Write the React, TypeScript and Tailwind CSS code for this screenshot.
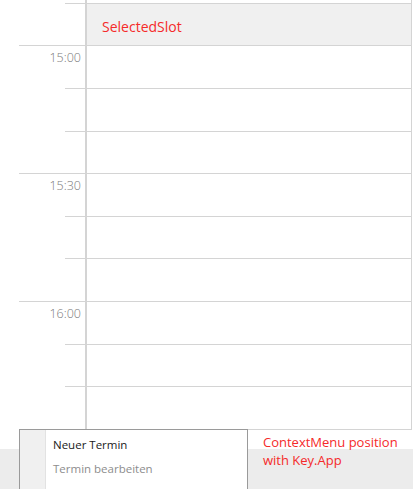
import React from 'react';

type Row = { h: number; full: boolean; label?: string; selected?: boolean };

const rows: Row[] = [
  { h: 4, full: false },
  { h: 42, full: true, selected: true },
  { h: 43, full: false, label: '15:00' },
  { h: 43, full: false },
  { h: 42, full: true },
  { h: 43, full: false, label: '15:30' },
  { h: 42, full: false },
  { h: 43, full: true },
  { h: 43, full: false, label: '16:00' },
  { h: 42, full: false },
  { h: 43, full: true },
];

const font = { fontFamily: '"Open Sans", "Noto Sans", sans-serif' };

const SlotRow: React.FC<{ row: Row }> = ({ row }) => (
  <div className="flex" style={{ height: row.h }}>
    <div className={`w-[66px] flex flex-col ${row.full ? 'border-b border-[#d4d4d4]' : ''}`}>
      {row.label && (
        <div className="pt-[3px] pr-[4px] text-right text-[12.5px] leading-[17px] font-light text-[#7a7a7a]">
          {row.label}
        </div>
      )}
      <div className="flex-1" />
      {!row.full && <div className="ml-[46px] h-px bg-[#d4d4d4]" />}
    </div>
    <div className="w-[2px] bg-[#d4d4d4]" />
    <div
      className={`flex-1 border-b border-r border-[#d4d4d4] flex items-center ${
        row.selected ? 'bg-[#f0f0f0]' : 'bg-white'
      }`}
    >
      {row.selected && (
        <span className="pl-[15px] pt-[4px] text-[14px] text-[#f52a2a]">SelectedSlot</span>
      )}
    </div>
  </div>
);

export default function App() {
  return (
    <div className="relative w-[417px] h-[489px] overflow-hidden bg-white flex flex-col" style={font}>
      <div className="ml-[19px] w-[393px] flex flex-col">
        {rows.map((r, i) => (
          <SlotRow key={i} row={r} />
        ))}
      </div>
      <div className="h-[19px] bg-white" />
      <div className="flex-1 w-[413px] bg-[#ececec]" />

      {/* context menu */}
      <div className="absolute left-[19px] top-[429px] w-[229px] h-[70px] border border-[#9a9a9a] bg-white flex">
        <div className="w-[26px] bg-[#f0f0f0] border-r border-[#e2e2e2]" />
        <div className="flex-1 pt-[3px] pl-[7px] text-[11.5px]">
          <div className="h-[24px] leading-[24px] text-[#1a1a1a]">Neuer Termin</div>
          <div className="h-[24px] leading-[24px] text-[#8d8d8d]">Termin bearbeiten</div>
        </div>
      </div>

      <div className="absolute left-[263px] top-[433px] text-[13px] leading-[18px] text-[#f52a2a]">
        ContextMenu position
        <br />
        with Key.App
      </div>
    </div>
  );
}
